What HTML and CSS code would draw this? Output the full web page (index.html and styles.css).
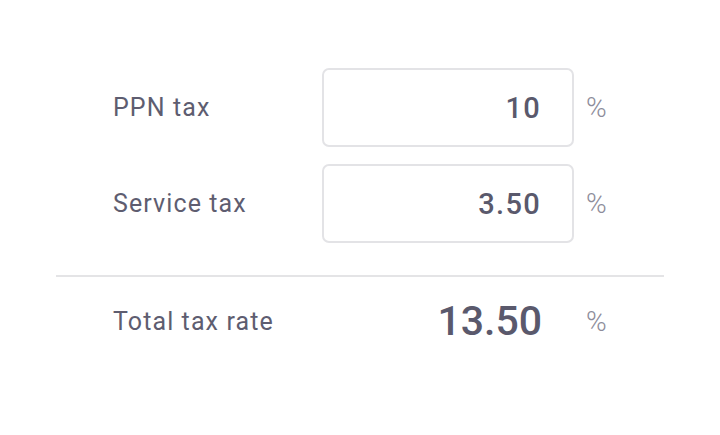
FILE: index.html
```html
<!DOCTYPE html>
<html>
<head>
<meta charset="utf-8">
<link rel="stylesheet" href="styles.css">
</head>
<body>
<div class="panel">
  <div class="row">
    <div class="label">PPN tax</div>
    <div class="field">10</div>
    <div class="unit">%</div>
  </div>
  <div class="row">
    <div class="label">Service tax</div>
    <div class="field">3.50</div>
    <div class="unit">%</div>
  </div>
  <div class="divider"></div>
  <div class="row total">
    <div class="label">Total tax rate</div>
    <div class="value">13.50</div>
    <div class="unit">%</div>
  </div>
</div>
</body>
</html>
```
FILE: styles.css
```css
html, body {
  margin: 0;
  padding: 0;
  background: #ffffff;
  font-family: Roboto, "Liberation Sans", sans-serif;
}
.panel {
  margin: 0 56px;
  padding-top: 68px;
}
.row {
  display: flex;
  align-items: center;
  padding-left: 57px;
}
.row + .row {
  margin-top: 17px;
}
.label {
  width: 209px;
  font-size: 25px;
  letter-spacing: 1.1px;
  color: #5e5d70;
}
.field {
  box-sizing: border-box;
  width: 252px;
  height: 79px;
  border: 2px solid #e3e3e6;
  border-radius: 7px;
  display: flex;
  align-items: center;
  justify-content: flex-end;
  padding-right: 31px;
  font-size: 29px;
  letter-spacing: 1.3px;
  font-weight: 500;
  color: #5a596c;
}
.unit {
  margin-left: 12px;
  font-size: 28px;
  font-weight: 300;
  color: #8d8c9a;
}
.divider {
  height: 2px;
  background: #e4e4e6;
  margin-top: 32px;
}
.row.total {
  margin-top: 16px;
  height: 56px;
}
.value {
  box-sizing: border-box;
  width: 252px;
  text-align: right;
  padding-right: 32px;
  font-size: 41px;
  font-weight: 500;
  color: #5a596c;
}
```
